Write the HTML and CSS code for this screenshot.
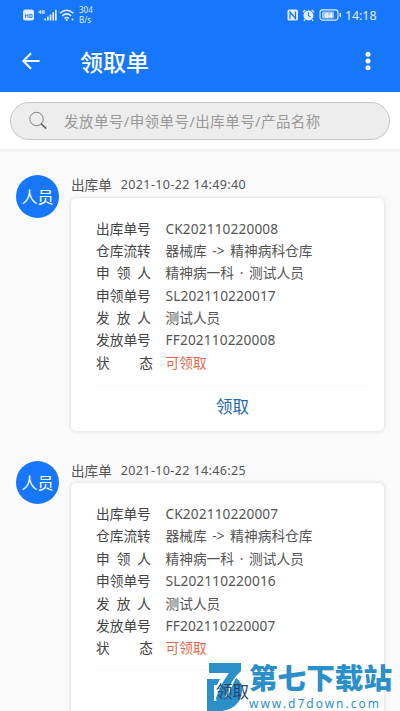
FILE: index.html
```html
<!DOCTYPE html>
<html lang="zh-CN">
<head>
<meta charset="utf-8">
<title>领取单</title>
<link rel="stylesheet" href="styles.css">
</head>
<body>
<div class="screen">
  <header class="top">
    <div class="status">
      <svg class="net" width="54" height="14" viewBox="0 0 54 14">
        <rect x="0" y="1.5" width="11" height="11" rx="2.5" fill="#e3edff"/>
        <text x="1.6" y="9.6" class="hd">HD</text>
        <text x="15" y="6" class="gen">46</text>
        <g fill="#e3edff"><rect x="21.3" y="10.5" width="1.7" height="2"/><rect x="24" y="8.5" width="1.7" height="4"/><rect x="26.7" y="6.5" width="1.7" height="6"/><rect x="29.4" y="4.2" width="1.7" height="8.3"/><rect x="32" y="1.8" width="1.7" height="10.7"/></g>
        <g fill="none" stroke="#e3edff" stroke-width="1.5"><path d="M37 5.3q6.700-6 13.400 0M39.300 7.900q4.400-4 8.800 0M41.500 10.300q2.200-1.800 4.400 0"/></g>
        <circle cx="43.700" cy="12" r="1.100" fill="#e3edff"/><circle cx="49.500" cy="11.500" r="1" fill="#e3edff"/>
      </svg>
      <div class="rate"><span>304</span><span>B/s</span></div>
      <svg class="sys" width="56" height="14" viewBox="0 0 56 14">
        <rect x=".5" y="1.500" width="10.500" height="11" rx="1.500" fill="#e3edff"/>
        <path d="M3 11V4l5.500 6.500V3.500" fill="none" stroke="#1677fa" stroke-width="1.200"/>
        <circle cx="21.500" cy="7.500" r="5" fill="#e3edff"/>
        <path d="M21.500 4.500v3.300l2 1.300" fill="none" stroke="#1677fa" stroke-width="1.100"/>
        <path d="M16 4l2.300-2M27 4l-2.300-2M18 11.500l-1.200 1.300M25 11.500l1.200 1.300" stroke="#e3edff" stroke-width="1.300"/>
        <rect x="33" y="1.900" width="18" height="10.200" rx="2.500" fill="none" stroke="#e3edff" stroke-width="1.100"/>
        <rect x="35" y="3.600" width="12" height="6.800" rx="1" fill="#9cc4fc"/>
        <text x="37.500" y="9.700" class="level">64</text>
        <rect x="52.600" y="4.800" width="1.400" height="4.400" rx=".7" fill="#e3edff"/>
      </svg>
      <span class="clock">14:18</span>
    </div>
    <div class="bar">
      <svg class="back" width="20" height="20" viewBox="0 0 20 20"><path d="M18.600 10H2.500M10 2.300L2.300 10l7.700 7.700" fill="none" stroke="#fff" stroke-width="2"/></svg>
      <h1 class="title">领取单</h1>
      <svg class="more" width="6" height="20" viewBox="0 0 6 20" fill="#fff"><circle cx="3" cy="3.300" r="2.500"/><circle cx="3" cy="10" r="2.500"/><circle cx="3" cy="16.700" r="2.500"/></svg>
    </div>
  </header>
  <div class="search-wrap">
    <div class="search">
      <svg width="20" height="20" viewBox="0 0 20 20"><circle cx="8.500" cy="8" r="6.700" fill="none" stroke="#777" stroke-width=".9"/><path d="M13 12.500l5.200 5.200" stroke="#666" stroke-width="1.700"/></svg>
      <span class="placeholder">发放单号/申领单号/出库单号/产品名称</span>
    </div>
  </div>
  <main class="list">
    <article class="entry">
      <div class="avatar">人员</div>
      <div class="body">
        <div class="head"><span>出库单</span><time>2021-10-22 14:49:40</time></div>
        <div class="card">
          <dl class="fields">
            <dt>出库单号</dt><dd class="code">CK202110220008</dd>
            <dt>仓库流转</dt><dd>器械库 -&gt; 精神病科仓库</dd>
            <dt class="three"><i>申</i><i>领</i><i>人</i></dt><dd>精神病一科 · 测试人员</dd>
            <dt>申领单号</dt><dd class="code">SL202110220017</dd>
            <dt class="three"><i>发</i><i>放</i><i>人</i></dt><dd>测试人员</dd>
            <dt>发放单号</dt><dd class="code">FF202110220008</dd>
            <dt class="two"><i>状</i><i>态</i></dt><dd class="ready">可领取</dd>
          </dl>
          <div class="action">领取</div>
        </div>
      </div>
    </article>
    <article class="entry">
      <div class="avatar">人员</div>
      <div class="body">
        <div class="head"><span>出库单</span><time>2021-10-22 14:46:25</time></div>
        <div class="card">
          <dl class="fields">
            <dt>出库单号</dt><dd class="code">CK202110220007</dd>
            <dt>仓库流转</dt><dd>器械库 -&gt; 精神病科仓库</dd>
            <dt class="three"><i>申</i><i>领</i><i>人</i></dt><dd>精神病一科 · 测试人员</dd>
            <dt>申领单号</dt><dd class="code">SL202110220016</dd>
            <dt class="three"><i>发</i><i>放</i><i>人</i></dt><dd>测试人员</dd>
            <dt>发放单号</dt><dd class="code">FF202110220007</dd>
            <dt class="two"><i>状</i><i>态</i></dt><dd class="ready">可领取</dd>
          </dl>
          <div class="action dark">领取</div>
        </div>
      </div>
    </article>
  </main>
  <div class="brand">
    <svg class="mark" width="42" height="49" viewBox="0 0 42 49">
      <path d="M2 1H34V9Q24 18 20 31Q18 39 10 43L9 36Q13 23 22 11H2Z" fill="#2b8fc9"/>
      <path d="M0 17H13L10 23H7V39H12Q20 38 24 27Q26 21 29 16Q36 20 35 30Q33 46 15 49H0Z" fill="#2b8fc9"/>
    </svg>
    <div class="words"><strong>第七下载站</strong><span>www.d7down.com</span></div>
  </div>
</div>
</body>
</html>
```
FILE: styles.css
```css
* { box-sizing: border-box; }
body { margin: 0; background: #fafafa; color: #444; font-family: "Noto Sans", "Noto Sans CJK SC", sans-serif; }
.screen { position: relative; width: 400px; height: 711px; overflow: hidden; }
.top { height: 92px; background: #1677fa; color: #fff; }
.status { display: flex; align-items: center; height: 30px; padding: 0 23px; color: #e3edff; }
.rate { display: flex; flex-direction: column; margin-left: 2px; font-size: 8px; line-height: 10px; }
.sys { margin-left: auto; }
.clock { width: 32px; margin-left: 2px; font-size: 12.5px; letter-spacing: -.1px; white-space: nowrap; }
.hd { font-size: 5.5px; font-weight: 700; fill: #1677fa; }
.gen { font-size: 6px; font-weight: 700; fill: #e3edff; }
.level { font-size: 7px; font-weight: 700; fill: #fff; }
.bar { display: flex; align-items: center; height: 62px; padding: 0 29px 0 21px; }
.title { margin: 1px auto 0 39px; font-size: 23px; font-weight: 500; line-height: 32px; }
.search-wrap { height: 57px; padding: 10px; background: #fff; box-shadow: 0 1px 3px rgba(0,0,0,.08); }
.search { display: flex; align-items: center; height: 38px; padding-left: 17px; border: 1px solid #c6c6c6; border-radius: 19px; background: #ededed; }
.placeholder { margin-left: 16px; color: #999; font-size: 14.5px; letter-spacing: .45px; line-height: 20px; white-space: nowrap; }
.list { padding: 25px 16px 0; }
.entry { display: flex; height: 285.5px; }
.avatar { flex: none; width: 43px; height: 43px; margin: 1px 12px 0 0; border-radius: 50%; background: #1677fa; color: #fff; font-size: 16px; line-height: 44px; text-align: center; }
.body { width: 313px; }
.head { display: flex; gap: 9px; height: 23.5px; font-size: 13.6px; line-height: 22px; color: #555; }
.head time { font-size: 12.5px; letter-spacing: .38px; }
.card { height: 233px; padding: 20px 15px 0 25px; border-radius: 5px; background: #fff; box-shadow: 0 0 4px rgba(0,0,0,.15); }
.fields { display: grid; grid-template-columns: 55px 1fr; grid-auto-rows: 22.4px; column-gap: 14.5px; height: 168px; margin: 0; border-bottom: 1px solid #f4f4f4; font-size: 13.7px; line-height: 22.4px; white-space: nowrap; }
.fields dd { margin: 0; color: #555; word-spacing: 2.2px; }
.fields .code { letter-spacing: .12px; }
.fields i { font-style: normal; }
.three, .two { display: flex; justify-content: space-between; }
.two { margin-right: -2px; }
.fields .ready { color: #e2684a; }
.action { height: 40px; font-size: 16.5px; line-height: 41px; text-align: center; color: #2268ab; }
.action.dark { position: relative; z-index: 1; color: #23476b; }
.brand { position: absolute; left: 207px; top: 662px; display: flex; color: #2b8fc9; pointer-events: none; }
.words { display: flex; flex-direction: column; }
.words strong { font-size: 28.6px; line-height: 34px; margin-top: -2px; font-weight: 900; font-family: "Noto Sans CJK SC", sans-serif; }
.words span { margin-top: 3px; font-size: 12px; line-height: 14px; letter-spacing: 2px; }
```
